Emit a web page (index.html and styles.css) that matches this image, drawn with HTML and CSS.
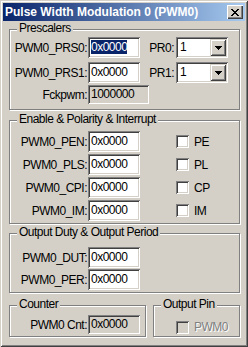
FILE: index.html
```html
<!DOCTYPE html>
<html>
<head>
    <title>Pulse Width Modulation 0 (PWM0)</title>
    <meta http-equiv="Content-Type" content="text/html; charset=utf-8" />
    <link rel="stylesheet" href="styles.css">
</head>

<body>
    <div class="window">
        <div class="titlebar">
            <span class="title">Pulse Width Modulation 0 (PWM0)</span>
            <span class="close">
                <svg width="8" height="7" viewBox="0 0 8 7" shape-rendering="crispEdges">
                    <path fill="#000" d="M0 0h2v1H0zM6 0h2v1H6zM1 1h2v1H1zM5 1h2v1H5zM2 2h4v1H2zM3 3h2v1H3zM2 4h4v1H2zM1 5h2v1H1zM5 5h2v1H5zM0 6h2v1H0zM6 6h2v1H6z"/>
                </svg>
            </span>
        </div>

        <div class="content">
            <div class="group prescalers">
                <span class="legend">Prescalers</span>
                <div class="row">
                    <span class="label">PWM0_PRS0:</span>
                    <div class="edit"><span class="sel">0x0000</span></div>
                    <span class="label-pr">PR0:</span>
                    <div class="combo">
                        <span class="combo-text">1</span>
                        <span class="combo-btn">
                            <svg width="7" height="4" viewBox="0 0 7 4" shape-rendering="crispEdges">
                                <path fill="#000" d="M0 0h7v1H0zM1 1h5v1H1zM2 2h3v1H2zM3 3h1v1H3z"/>
                            </svg>
                        </span>
                    </div>
                </div>
                <div class="row">
                    <span class="label">PWM0_PRS1:</span>
                    <div class="edit">0x0000</div>
                    <span class="label-pr">PR1:</span>
                    <div class="combo">
                        <span class="combo-text">1</span>
                        <span class="combo-btn">
                            <svg width="7" height="4" viewBox="0 0 7 4" shape-rendering="crispEdges">
                                <path fill="#000" d="M0 0h7v1H0zM1 1h5v1H1zM2 2h3v1H2zM3 3h1v1H3z"/>
                            </svg>
                        </span>
                    </div>
                </div>
                <div class="row row-tight">
                    <span class="label">Fckpwm:</span>
                    <div class="edit readonly wide">1000000</div>
                </div>
            </div>

            <div class="group enables">
                <span class="legend">Enable &amp; Polarity &amp; Interrupt</span>
                <div class="row">
                    <span class="label">PWM0_PEN:</span>
                    <div class="edit">0x0000</div>
                    <span class="check"></span>
                    <span class="check-label">PE</span>
                </div>
                <div class="row">
                    <span class="label">PWM0_PLS:</span>
                    <div class="edit">0x0000</div>
                    <span class="check"></span>
                    <span class="check-label">PL</span>
                </div>
                <div class="row">
                    <span class="label">PWM0_CPI:</span>
                    <div class="edit">0x0000</div>
                    <span class="check"></span>
                    <span class="check-label">CP</span>
                </div>
                <div class="row">
                    <span class="label">PWM0_IM:</span>
                    <div class="edit">0x0000</div>
                    <span class="check"></span>
                    <span class="check-label">IM</span>
                </div>
            </div>

            <div class="group outputs">
                <span class="legend">Output Duty &amp; Output Period</span>
                <div class="row">
                    <span class="label">PWM0_DUT:</span>
                    <div class="edit">0x0000</div>
                </div>
                <div class="row">
                    <span class="label">PWM0_PER:</span>
                    <div class="edit">0x0000</div>
                </div>
            </div>

            <div class="bottom">
                <div class="group counter">
                    <span class="legend">Counter</span>
                    <div class="row">
                        <span class="label">PWM0 Cnt:</span>
                        <div class="edit readonly">0x0000</div>
                    </div>
                </div>
                <div class="group pin">
                    <span class="legend">Output Pin</span>
                    <div class="row">
                        <span class="check disabled"></span>
                        <span class="check-label disabled-text">PWM0</span>
                    </div>
                </div>
            </div>
        </div>
    </div>
</body>
</html>
```

FILE: styles.css
```css
body {
    margin: 0;
    background-color: #d4d0c8;
    font-family: "Liberation Sans", Arial, sans-serif;
    font-size: 12px;
    letter-spacing: -0.5px;
    color: #000;
}
.window {
    width: 248px;
    height: 347px;
    box-sizing: border-box;
    padding: 3px;
    background-color: #d4d0c8;
    box-shadow: inset 1px 1px 0 #d4d0c8, inset -1px -1px 0 #404040,
                inset 2px 2px 0 #fff, inset -2px -2px 0 #808080;
    display: flex;
    flex-direction: column;
}
.titlebar {
    height: 18px;
    padding: 0 2px;
    background: linear-gradient(to right, #0a246a, #a6caf0);
    display: flex;
    align-items: center;
    justify-content: space-between;
}
.title {
    font-weight: bold;
    font-size: 12px;
    letter-spacing: 0;
    color: #fff;
    white-space: nowrap;
}
.close {
    width: 16px;
    height: 14px;
    box-sizing: border-box;
    background-color: #d4d0c8;
    box-shadow: inset 1px 1px 0 #fff, inset -1px -1px 0 #404040,
                inset -2px -2px 0 #808080;
    display: flex;
    align-items: center;
    justify-content: center;
}
.close svg {
    display: block;
    margin-left: -1px;
}
.content {
    flex: 1;
    padding: 8px 5px 0 6px;
    display: flex;
    flex-direction: column;
}

/* group box */
.group {
    position: relative;
    border: 1px solid #808080;
    box-shadow: 1px 1px 0 #fff, inset 1px 1px 0 #fff;
    box-sizing: border-box;
}
.legend {
    position: absolute;
    left: 7px;
    top: -9px;
    padding: 0 2px;
    line-height: 15px;
    background-color: #d4d0c8;
    white-space: nowrap;
}
.prescalers {
    height: 81px;
    padding-top: 7px;
}
.enables {
    height: 104px;
    margin-top: 10px;
    padding-top: 10px;
}
.outputs {
    height: 60px;
    margin-top: 9px;
    padding-top: 13px;
}
.bottom {
    display: flex;
    gap: 7px;
    margin-top: 12px;
}
.counter {
    width: 137px;
    height: 32px;
    padding-top: 9px;
}
.pin {
    width: 87px;
    height: 32px;
    padding-top: 14px;
}

.row {
    display: flex;
    align-items: center;
    margin-bottom: 4px;
}
.enables .row {
    margin-bottom: 2px;
}
.outputs .row {
    margin-bottom: 1px;
}
.row-tight {
    margin-top: -2px;
}
.label {
    width: 78px;
    padding-right: 1px;
    box-sizing: border-box;
    text-align: right;
    white-space: nowrap;
}
.label-pr {
    width: 36px;
    padding-right: 2px;
    box-sizing: border-box;
    text-align: right;
}

/* edit box */
.edit {
    width: 52px;
    height: 21px;
    box-sizing: border-box;
    padding: 2px 3px 0;
    line-height: 16px;
    background-color: #fff;
    box-shadow: inset 1px 1px 0 #808080, inset -1px -1px 0 #fff,
                inset 2px 2px 0 #404040, inset -2px -2px 0 #d4d0c8;
}
.edit.readonly {
    background-color: #d4d0c8;
    height: 19px;
    padding-top: 1px;
}
.edit.wide {
    width: 61px;
}
.sel {
    background-color: #0a246a;
    color: #fff;
}

/* combo box */
.combo {
    width: 52px;
    height: 21px;
    box-sizing: border-box;
    padding: 2px;
    background-color: #fff;
    box-shadow: inset 1px 1px 0 #808080, inset -1px -1px 0 #fff,
                inset 2px 2px 0 #404040, inset -2px -2px 0 #d4d0c8;
    display: flex;
}
.combo-text {
    flex: 1;
    padding-left: 2px;
    line-height: 16px;
}
.combo-btn {
    width: 16px;
    height: 17px;
    box-sizing: border-box;
    background-color: #d4d0c8;
    box-shadow: inset 1px 1px 0 #d4d0c8, inset -1px -1px 0 #404040,
                inset 2px 2px 0 #fff, inset -2px -2px 0 #808080;
    display: flex;
    align-items: center;
    justify-content: center;
}

/* check box */
.check {
    width: 13px;
    height: 13px;
    box-sizing: border-box;
    margin-left: 36px;
    background-color: #fff;
    box-shadow: inset 1px 1px 0 #808080, inset -1px -1px 0 #fff,
                inset 2px 2px 0 #404040, inset -2px -2px 0 #d4d0c8;
}
.check.disabled {
    margin-left: 22px;
    background-color: #d4d0c8;
}
.check-label {
    margin-left: 5px;
}
.disabled-text {
    color: #808080;
    text-shadow: 1px 1px 0 #fff;
}
```
